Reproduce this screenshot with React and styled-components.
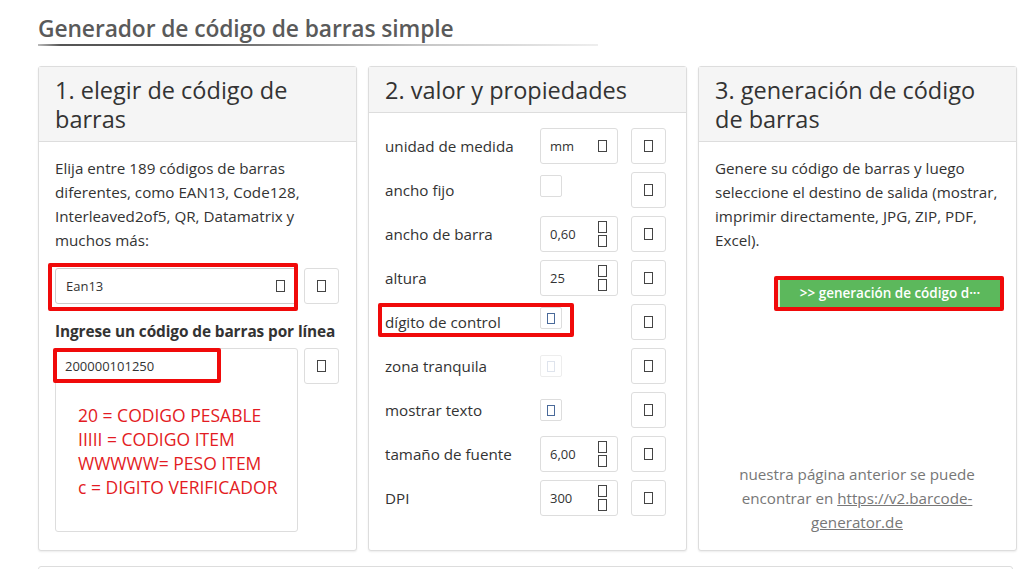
import React from "react";
import styled, { createGlobalStyle } from "styled-components";

const Global = createGlobalStyle`
  html, body { margin: 0; padding: 0; background: #fff; }
  body { font-family: "Open Sans", "Noto Sans", sans-serif; color: #333; overflow: hidden; }
  * { box-sizing: border-box; }
`;

const Page = styled.div`
  padding: 16px 6px 0 38px;
  width: 1023px;
  height: 569px;
  overflow: hidden;
`;

const Heading = styled.h1`
  margin: 0;
  font-size: 22.8px;
  font-weight: 600;
  color: #5a5a5a;
  line-height: 26px;
  letter-spacing: -0.1px;
`;

const Underline = styled.div`
  margin-top: 2px;
  width: 560px;
  height: 2px;
  background: linear-gradient(90deg, #bbb 0%, #555 4%, #5a5a5a 28%, #c8c8c8 70%, #eee 100%);
`;

const Cards = styled.div`
  margin-top: 20px;
  display: flex;
  gap: 11px;
  align-items: stretch;
`;

const Card = styled.section`
  width: 320px;
  height: 485px;
  border: 1px solid #ddd;
  border-radius: 3px;
  box-shadow: 0 1px 2px rgba(0, 0, 0, 0.08);
  display: flex;
  flex-direction: column;
  background: #fff;
`;

const CardHeader = styled.div`
  background: #f5f5f5;
  border-bottom: 1px solid #ddd;
  padding: 9px 16px 7px;
`;

const CardTitle = styled.h2`
  margin: 0;
  font-size: 23.5px;
  font-weight: 400;
  line-height: 29px;
  color: #333;
`;

const CardBody = styled.div`
  padding: ${(p) => p.$pad || "14px 17px 16px 16px"};
  display: flex;
  flex-direction: column;
  flex: 1;
`;

const Text = styled.p`
  margin: 0;
  font-size: 15.2px;
  line-height: 24px;
  color: #333;
`;

const FieldRow = styled.div`
  display: flex;
  gap: 6px;
  align-items: flex-start;
  margin-top: ${(p) => p.$mt || 0}px;
`;

const Annotated = styled.div`
  position: relative;
  flex: 1;
  display: flex;
`;

const RedBox = styled.div`
  position: absolute;
  border: 4px solid #f00a0a;
  border-radius: 2px;
  pointer-events: none;
  left: ${(p) => p.$l}px;
  top: ${(p) => p.$t}px;
  width: ${(p) => p.$w}px;
  height: ${(p) => p.$h}px;
`;

const Select = styled.div`
  flex: 1;
  height: 36px;
  border: 1px solid #ccc;
  border-radius: 3px;
  display: flex;
  align-items: center;
  justify-content: space-between;
  padding: 0 12px 0 10px;
  font-size: 13px;
  color: #333;
  background: #fff;
`;

const Tofu = styled.span`
  display: inline-block;
  width: 9px;
  height: 12px;
  border: 1px solid ${(p) => p.$color || "#444"};
  opacity: ${(p) => (p.$faded ? 0.35 : 1)};
`;

const IconButton = styled.div`
  width: 35px;
  height: 36px;
  flex: none;
  border: 1px solid #ddd;
  border-radius: 3px;
  display: flex;
  align-items: center;
  justify-content: center;
  background: #fff;
`;

const Label = styled.div`
  font-size: 15.4px;
  font-weight: 700;
  line-height: 24px;
  margin-top: 16px;
  margin-bottom: 4px;
  color: #333;
  letter-spacing: -0.1px;
  white-space: nowrap;
`;

const TextArea = styled.div`
  position: relative;
  flex: 1;
  height: 184px;
  border: 1px solid #ddd;
  border-radius: 3px;
  padding: 8px 9px;
  font-size: 13px;
  line-height: 18px;
  color: #333;
`;

const Note = styled.div`
  position: absolute;
  left: 22px;
  top: 54px;
  font-size: 17.5px;
  line-height: 24px;
  color: #e31b23;
  white-space: nowrap;
`;

const PropGrid = styled.div`
  display: grid;
  grid-template-columns: 142px 78px 35px;
  column-gap: 13px;
  row-gap: 8px;
  align-items: center;
`;

const PropLabel = styled.div`
  position: relative;
  font-size: 15.2px;
  line-height: 36px;
  height: 36px;
  color: #333;
  white-space: nowrap;
`;

const InputBox = styled.div`
  height: 36px;
  border: 1px solid #ddd;
  border-radius: 3px;
  display: flex;
  align-items: center;
  justify-content: space-between;
  padding: 0 10px 0 9px;
  font-size: 13px;
  color: #333;
`;

const Spinner = styled.div`
  display: flex;
  flex-direction: column;
  gap: 2px;
`;

const CheckCell = styled.div`
  height: 36px;
  display: flex;
  align-items: ${(p) => (p.$top ? "flex-start" : "center")};
  padding-top: ${(p) => (p.$top ? 3 : 0)}px;
`;

const Checkbox = styled.div`
  width: 22px;
  height: 22px;
  border: 1px solid #ddd;
  border-radius: 2px;
  display: flex;
  align-items: center;
  justify-content: center;
  opacity: ${(p) => (p.$faded ? 0.5 : 1)};
`;

const ButtonWrap = styled.div`
  position: relative;
  align-self: flex-end;
  margin-top: 27px;
  margin-right: -1px;
`;

const GreenButton = styled.div`
  width: 222px;
  height: 28px;
  background: #5cb85c;
  border-left: 2px solid #dff0d8;
  color: #fff;
  font-size: 13.5px;
  font-weight: 600;
  display: flex;
  align-items: center;
  justify-content: center;
  white-space: nowrap;
`;

const Footer = styled.div`
  margin-top: auto;
  text-align: center;
  font-size: 15.2px;
  line-height: 24px;
  color: #777;
  padding: 0 10px 0;
`;

const Link = styled.a`
  color: #777;
  text-decoration: underline;
`;

const NextPanel = styled.div`
  margin-top: 15px;
  width: 975px;
  height: 40px;
  border: 1px solid #ddd;
  border-radius: 3px;
`;

const props = [
  { label: "unidad de medida", kind: "select", value: "mm" },
  { label: "ancho fijo", kind: "check", top: true },
  { label: "ancho de barra", kind: "spin", value: "0,60" },
  { label: "altura", kind: "spin", value: "25" },
  { label: "dígito de control", kind: "check", checked: true, mark: true },
  { label: "zona tranquila", kind: "check", checked: true, faded: true },
  { label: "mostrar texto", kind: "check", checked: true },
  { label: "tamaño de fuente", kind: "spin", value: "6,00" },
  { label: "DPI", kind: "spin", value: "300" },
];

function PropControl({ p }) {
  if (p.kind === "select")
    return (
      <InputBox>
        <span>{p.value}</span>
        <Tofu />
      </InputBox>
    );
  if (p.kind === "spin")
    return (
      <InputBox>
        <span>{p.value}</span>
        <Spinner>
          <Tofu />
          <Tofu />
        </Spinner>
      </InputBox>
    );
  return (
    <CheckCell $top={p.top || p.mark}>
      <Checkbox $faded={p.faded}>
        {p.checked && <Tofu $color="#4a6a9a" $faded={p.faded} style={{ width: 8, height: 11 }} />}
      </Checkbox>
    </CheckCell>
  );
}

export default function App() {
  return (
    <Page>
      <Global />
      <Heading>Generador de código de barras simple</Heading>
      <Underline />
      <Cards>
        <Card>
          <CardHeader>
            <CardTitle>1. elegir de código de barras</CardTitle>
          </CardHeader>
          <CardBody>
            <Text>
              Elija entre 189 códigos de barras diferentes, como EAN13, Code128, Interleaved2of5, QR, Datamatrix y
              muchos más:
            </Text>
            <FieldRow $mt={16}>
              <Annotated>
                <Select>
                  <span>Ean13</span>
                  <Tofu />
                </Select>
                <RedBox $l={-7} $t={-5} $w={250} $h={48} />
              </Annotated>
              <IconButton>
                <Tofu />
              </IconButton>
            </FieldRow>
            <Label>Ingrese un código de barras por línea</Label>
            <FieldRow>
              <TextArea>
                200000101250
                <Note>
                  20 = CODIGO PESABLE
                  <br />
                  IIIII = CODIGO ITEM
                  <br />
                  WWWWW= PESO ITEM
                  <br />c = DIGITO VERIFICADOR
                </Note>
                <RedBox $l={-3} $t={-1} $w={168} $h={35} />
              </TextArea>
              <IconButton>
                <Tofu />
              </IconButton>
            </FieldRow>
          </CardBody>
        </Card>

        <Card>
          <CardHeader>
            <CardTitle>2. valor y propiedades</CardTitle>
          </CardHeader>
          <CardBody $pad="15px 17px 16px 16px">
            <PropGrid>
              {props.map((p) => (
                <React.Fragment key={p.label}>
                  <PropLabel>
                    {p.label}
                    {p.mark && <RedBox $l={-7} $t={-1} $w={196} $h={34} />}
                  </PropLabel>
                  <PropControl p={p} />
                  <IconButton>
                    <Tofu />
                  </IconButton>
                </React.Fragment>
              ))}
            </PropGrid>
          </CardBody>
        </Card>

        <Card>
          <CardHeader>
            <CardTitle>3. generación de código de barras</CardTitle>
          </CardHeader>
          <CardBody>
            <Text>
              Genere su código de barras y luego seleccione el destino de salida (mostrar, imprimir directamente, JPG,
              ZIP, PDF, Excel).
            </Text>
            <ButtonWrap>
              <GreenButton>&gt;&gt; generación de código d···</GreenButton>
              <RedBox $l={-4} $t={-3} $w={230} $h={35} />
            </ButtonWrap>
            <Footer>
              nuestra página anterior se puede encontrar en <Link>https://v2.barcode-generator.de</Link>
            </Footer>
          </CardBody>
        </Card>
      </Cards>
      <NextPanel />
    </Page>
  );
}
